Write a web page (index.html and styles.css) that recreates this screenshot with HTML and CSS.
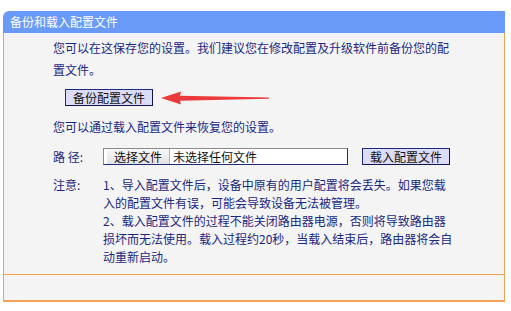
FILE: index.html
```html
<!DOCTYPE html>
<html lang="zh-CN">
<head>
<meta charset="utf-8">
<title>备份和载入配置文件</title>
<link rel="stylesheet" href="styles.css">
</head>
<body>
<div class="panel">
  <div class="hd">备份和载入配置文件</div>
  <div class="bd">
    <div class="content">
      <p class="intro">您可以在这保存您的设置。我们建议您在修改配置及升级软件前备份您的配置文件。</p>
      <div class="backup-row">
        <span class="btn">备份配置文件</span>
        <svg class="arrow" width="110" height="14" viewBox="0 0 110 14">
          <path d="M0 7 L20 0.5 L19 4.8 L108 6.5 L108 7.7 L19 9.7 L20 13.5 Z" fill="#ea3a3a"/>
        </svg>
      </div>
      <p class="restore">您可以通过载入配置文件来恢复您的设置。</p>
      <div class="path-row">
        <span class="label">路&nbsp;径:</span>
        <span class="file">
          <span class="choose">选择文件</span>
          <span class="none">未选择任何文件</span>
        </span>
        <span class="btn load">载入配置文件</span>
      </div>
      <div class="note">
        <span class="label">注意:</span>
        <div class="note-text">
          <div>1、导入配置文件后，设备中原有的用户配置将会丢失。如果您载入的配置文件有误，可能会导致设备无法被管理。</div>
          <div>2、载入配置文件的过程不能关闭路由器电源，否则将导致路由器损坏而无法使用。载入过程约20秒，当载入结束后，路由器将会自动重新启动。</div>
        </div>
      </div>
    </div>
    <div class="ft"></div>
  </div>
</div>
</body>
</html>
```
FILE: styles.css
```css
html, body {
  margin: 0;
  padding: 0;
  background: #ffffff;
}
body {
  font-family: "Noto Sans CJK SC", "Noto Sans", sans-serif;
  font-size: 12px;
  color: #1a2880;
}
.panel {
  margin: 11px 0 0 3px;
  width: 502px;
}
.hd {
  height: 22px;
  line-height: 22px;
  background: #6a9af8;
  color: #ffffff;
  padding-left: 7px;
  border-top-left-radius: 6px;
}
.bd {
  background: #f4f4f4;
  border-left: 1px solid #f2a155;
  border-right: 1px solid #f2a155;
  border-bottom: 2px solid #f2a155;
}
.content {
  padding: 4px 0 9px 49px;
  height: 228px;
}
.intro {
  margin: 0;
  width: 400px;
  line-height: 22px;
}
.backup-row {
  display: flex;
  align-items: center;
  gap: 8px;
  margin: 8px 0 0 12px;
}
.btn {
  display: inline-block;
  background: #dcdcf7;
  border: 1px solid #1c2a7c;
  border-right-color: #0e1650;
  border-bottom-color: #0e1650;
  color: #111111;
  padding: 0 7px;
  line-height: 15px;
  height: 15px;
  font-size: 12px;
}
.restore {
  margin: 10px 0 0 0;
  line-height: 22px;
}
.path-row {
  display: flex;
  align-items: center;
  margin-top: 10px;
}
.label {
  width: 50px;
  flex: none;
}
.file {
  display: flex;
  align-items: center;
  width: 243px;
  height: 15px;
  border: 1px solid #1c2a7c;
  border-left-color: #8a8a8a;
  border-top-color: #8a8a8a;
  background: #ffffff;
}
.choose {
  height: 15px;
  line-height: 15px;
  padding: 0 7px;
  margin-left: 3px;
  background: linear-gradient(#f8f8f8, #e2e2e2);
  border-right: 1px solid #b0b0b0;
  color: #111111;
}
.none {
  padding-left: 3px;
  color: #111111;
}
.btn.load {
  margin-left: 14px;
}
.note {
  display: flex;
  margin-top: 11px;
}
.note-text {
  width: 350px;
  line-height: 18px;
}
.ft {
  height: 25px;
  border-top: 1px solid #f2a155;
}
```
